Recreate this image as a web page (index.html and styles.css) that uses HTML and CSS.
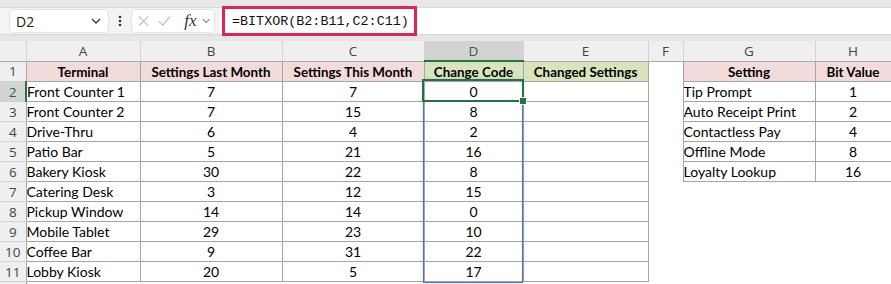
FILE: index.html
```html
<!DOCTYPE html>
<html lang="en">
<head>
    <meta charset="UTF-8">
    <title>BITXOR Change Code</title>
    <link rel="stylesheet" href="styles.css">
</head>
<body>
    <div class="toolbar">
        <div class="name-box">
            <span>D2</span>
            <svg class="chevron" width="10" height="6" viewBox="0 0 10 6"><path d="M1 1l4 4 4-4" fill="none" stroke="#333" stroke-width="1.3"/></svg>
        </div>
        <div class="more">
            <svg width="4" height="12" viewBox="0 0 4 12"><circle cx="2" cy="2" r="1.3" fill="#333"/><circle cx="2" cy="6" r="1.3" fill="#333"/><circle cx="2" cy="10" r="1.3" fill="#333"/></svg>
        </div>
        <div class="fx-box">
            <svg width="12" height="12" viewBox="0 0 12 12"><path d="M1 1l10 10M11 1L1 11" stroke="#bdbdbd" stroke-width="1.2"/></svg>
            <svg width="14" height="12" viewBox="0 0 14 12"><path d="M1 6.5l4 4L13 1" fill="none" stroke="#bdbdbd" stroke-width="1.2"/></svg>
            <span class="fx">fx</span>
            <svg width="9" height="6" viewBox="0 0 9 6"><path d="M1 1l3.5 3.5L8 1" fill="none" stroke="#888" stroke-width="1.1"/></svg>
        </div>
        <div class="formula">
            <span class="formula-text">=BITXOR(B2:B11,C2:C11)</span>
        </div>
    </div>
    <div class="band"></div>

    <div class="sheet">
        <table class="grid">
            <colgroup>
                <col class="w-row">
                <col class="w-a">
                <col class="w-b">
                <col class="w-c">
                <col class="w-d">
                <col class="w-e">
                <col class="w-f">
                <col class="w-g">
                <col class="w-h">
            </colgroup>
            <tr class="col-heads">
                <th class="corner"></th>
                <th>A</th>
                <th>B</th>
                <th>C</th>
                <th class="picked">D</th>
                <th>E</th>
                <th>F</th>
                <th>G</th>
                <th>H</th>
            </tr>
            <tr>
                <th class="row-head">1</th>
                <td class="cell head pink">Terminal</td>
                <td class="cell head pink">Settings Last Month</td>
                <td class="cell head pink">Settings This Month</td>
                <td class="cell head green">Change Code</td>
                <td class="cell head green">Changed Settings</td>
                <td></td>
                <td class="cell head pink">Setting</td>
                <td class="cell head pink">Bit Value</td>
            </tr>
            <tr>
                <th class="row-head picked">2</th>
                <td class="cell">Front Counter 1</td>
                <td class="cell num">7</td>
                <td class="cell num">7</td>
                <td class="cell num">0</td>
                <td class="cell"></td>
                <td></td>
                <td class="cell">Tip Prompt</td>
                <td class="cell num">1</td>
            </tr>
            <tr>
                <th class="row-head">3</th>
                <td class="cell">Front Counter 2</td>
                <td class="cell num">7</td>
                <td class="cell num">15</td>
                <td class="cell num">8</td>
                <td class="cell"></td>
                <td></td>
                <td class="cell">Auto Receipt Print</td>
                <td class="cell num">2</td>
            </tr>
            <tr>
                <th class="row-head">4</th>
                <td class="cell">Drive-Thru</td>
                <td class="cell num">6</td>
                <td class="cell num">4</td>
                <td class="cell num">2</td>
                <td class="cell"></td>
                <td></td>
                <td class="cell">Contactless Pay</td>
                <td class="cell num">4</td>
            </tr>
            <tr>
                <th class="row-head">5</th>
                <td class="cell">Patio Bar</td>
                <td class="cell num">5</td>
                <td class="cell num">21</td>
                <td class="cell num">16</td>
                <td class="cell"></td>
                <td></td>
                <td class="cell">Offline Mode</td>
                <td class="cell num">8</td>
            </tr>
            <tr>
                <th class="row-head">6</th>
                <td class="cell">Bakery Kiosk</td>
                <td class="cell num">30</td>
                <td class="cell num">22</td>
                <td class="cell num">8</td>
                <td class="cell"></td>
                <td></td>
                <td class="cell">Loyalty Lookup</td>
                <td class="cell num">16</td>
            </tr>
            <tr>
                <th class="row-head">7</th>
                <td class="cell">Catering Desk</td>
                <td class="cell num">3</td>
                <td class="cell num">12</td>
                <td class="cell num">15</td>
                <td class="cell"></td>
                <td></td>
                <td></td>
                <td></td>
            </tr>
            <tr>
                <th class="row-head">8</th>
                <td class="cell">Pickup Window</td>
                <td class="cell num">14</td>
                <td class="cell num">14</td>
                <td class="cell num">0</td>
                <td class="cell"></td>
                <td></td>
                <td></td>
                <td></td>
            </tr>
            <tr>
                <th class="row-head">9</th>
                <td class="cell">Mobile Tablet</td>
                <td class="cell num">29</td>
                <td class="cell num">23</td>
                <td class="cell num">10</td>
                <td class="cell"></td>
                <td></td>
                <td></td>
                <td></td>
            </tr>
            <tr>
                <th class="row-head">10</th>
                <td class="cell">Coffee Bar</td>
                <td class="cell num">9</td>
                <td class="cell num">31</td>
                <td class="cell num">22</td>
                <td class="cell"></td>
                <td></td>
                <td></td>
                <td></td>
            </tr>
            <tr>
                <th class="row-head">11</th>
                <td class="cell">Lobby Kiosk</td>
                <td class="cell num">20</td>
                <td class="cell num">5</td>
                <td class="cell num">17</td>
                <td class="cell"></td>
                <td></td>
                <td></td>
                <td></td>
            </tr>
            <tr>
                <th class="row-head"></th>
                <td></td>
                <td></td>
                <td></td>
                <td></td>
                <td></td>
                <td></td>
                <td></td>
                <td></td>
            </tr>
        </table>

        <!-- spill range and active cell drawn over the grid -->
        <div class="spill-range"></div>
        <div class="active-cell"><span class="fill-handle"></span></div>
    </div>
</body>
</html>
```

FILE: styles.css
```css
html, body {
    margin: 0;
    padding: 0;
    height: 284px;
    overflow: hidden;
    background: #ffffff;
}
body {
    font-family: "Open Sans", "Noto Sans", sans-serif;
}

/* formula bar */
.toolbar {
    display: flex;
    align-items: flex-start;
    height: 34px;
    background: linear-gradient(#e7e7e7 0, #e7e7e7 7px, #d9d9d9 7px, #d9d9d9 8px, #f4f4f4 8px);
}
.name-box {
    display: flex;
    align-items: center;
    justify-content: space-between;
    box-sizing: border-box;
    width: 100px;
    height: 24px;
    margin: 9px 0 0 9px;
    padding: 0 7px 0 6px;
    background: #ffffff;
    border: 1px solid #e4e4e4;
    border-radius: 4px;
    font-size: 14px;
    color: #222;
}
.more {
    display: flex;
    align-items: center;
    justify-content: center;
    width: 22px;
    height: 24px;
    margin-top: 9px;
}
.fx-box {
    display: flex;
    align-items: center;
    gap: 9px;
    box-sizing: border-box;
    width: 84px;
    height: 24px;
    margin-top: 9px;
    padding: 0 4px 0 6px;
    background: #ffffff;
    border: 1px solid #e4e4e4;
    border-radius: 4px;
}
.fx {
    font-family: "Liberation Serif", serif;
    font-style: italic;
    font-size: 17px;
    color: #333;
    margin-left: 4px;
    margin-right: -4px;
}
.formula {
    flex: 1;
    height: 26px;
    margin: 8px 0 0 5px;
    padding-left: 2px;
    background: #ffffff;
}
.formula-text {
    display: inline-block;
    box-sizing: border-box;
    height: 30px;
    margin-top: -4px;
    padding: 3px 7px 0 7px;
    border: 3px solid #e0245a;
    font-family: "Liberation Mono", "DejaVu Sans Mono", monospace;
    font-size: 13.4px;
    line-height: 19px;
    color: #111;
    width: 195px;
}
.band {
    height: 7px;
    background: #e6e6e6;
    border-top: 1px solid #d6d6d6;
    box-sizing: border-box;
}

/* sheet grid */
.sheet {
    position: relative;
}
.grid {
    border-collapse: collapse;
    table-layout: fixed;
    width: 891px;
}
.w-row { width: 26px; }
.w-a { width: 114px; }
.w-b { width: 142px; }
.w-c { width: 142px; }
.w-d { width: 99px; }
.w-e { width: 125px; }
.w-f { width: 35px; }
.w-g { width: 132px; }
.w-h { width: 76px; }

.grid tr {
    height: 20px;
}
.grid th, .grid td {
    padding: 0;
    height: 19px;
    overflow: hidden;
    white-space: nowrap;
}
.col-heads th {
    background: #efefef;
    color: #444;
    font-weight: normal;
    font-size: 13.5px;
    border-right: 1px solid #d3d3d3;
    border-bottom: 1px solid #a9a9a9;
    text-align: center;
}
.col-heads th.picked {
    background: #d3d3d3;
    color: #1d6b3f;
    border-bottom: 2px solid #217346;
}
.corner {
    background: #efefef linear-gradient(135deg, transparent 0, transparent 60%, #bdbdbd 60%) no-repeat;
    background-size: 11px 11px;
    background-position: right 3px bottom 3px;
}
.col-heads th.corner {
    background-color: #efefef;
}
.row-head {
    background: #efefef;
    color: #444;
    font-weight: normal;
    font-size: 13.5px;
    text-align: center;
    border-right: 1px solid #a9a9a9;
    border-bottom: 1px solid #d3d3d3;
}
.row-head.picked {
    background: #d3d3d3;
    color: #1d6b3f;
    border-right: 2px solid #217346;
}

.cell {
    border: 1px solid #a5a5a5;
    font-family: Lato, "Noto Sans", sans-serif;
    font-size: 14px;
    color: #000;
    padding-left: 2px;
    vertical-align: bottom;
    line-height: 18px;
}
.num {
    text-align: center;
}
.head {
    font-weight: bold;
    font-size: 13.4px;
    text-align: center;
}
.pink {
    background: #f2dcdb;
}
.green {
    background: #d8e4bc;
}

/* selection overlays */
.spill-range {
    position: absolute;
    left: 423px;
    top: 39px;
    width: 98px;
    height: 201px;
    border: 1px solid #4472c4;
    box-shadow: 0 0 5px rgba(0, 0, 0, 0.12);
    pointer-events: none;
}
.active-cell {
    position: absolute;
    left: 422px;
    top: 38px;
    width: 98px;
    height: 19px;
    border: 2px solid #217346;
    pointer-events: none;
}
.fill-handle {
    position: absolute;
    right: -5px;
    bottom: -5px;
    width: 6px;
    height: 6px;
    background: #217346;
    border: 1px solid #ffffff;
}
```
